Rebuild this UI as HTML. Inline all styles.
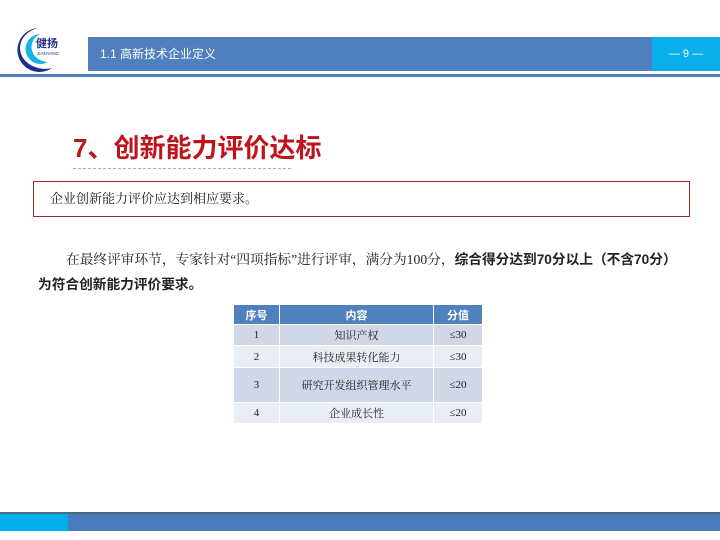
<!DOCTYPE html>
<html><head><meta charset="utf-8"><style>
*{margin:0;padding:0;box-sizing:border-box}
body{width:720px;height:540px;background:#fff;position:relative;overflow:hidden;font-family:"Liberation Sans","Noto Sans CJK SC",sans-serif}
.a{position:absolute}
.s{font-family:"Liberation Serif","Noto Serif CJK SC",serif}
table{border-collapse:collapse;font-size:11px;color:#222}
td{text-align:center;border:1px solid #fff;padding:0;vertical-align:middle}
</style></head><body>
<svg class="a" style="left:12px;top:24px" width="56" height="52" viewBox="0 0 56 52">
<path d="M26 4 A22 22 0 1 0 40 44 A24 20 0 0 1 26 4Z" fill="#1b2f8f"/>
<path d="M28 10 A15 15 0 1 0 36 38 A17 15 0 0 1 28 10Z" fill="#13b4e6"/>
<text x="24" y="23" font-size="11" font-weight="bold" fill="#1b2f8f" font-family="Noto Sans CJK SC">健扬</text>
<text x="25" y="31" font-size="4.5" fill="#1b2f8f">JIANYANG</text>
</svg>
<div class="a" style="left:88px;top:37px;width:564px;height:34px;background:#4f7fbf;color:#fff;font-size:12px;line-height:34px;padding-left:12px">1.1 高新技术企业定义</div>
<div class="a" style="left:652px;top:37px;width:68px;height:34px;background:#0aaee8;color:#fff;font-size:11px;line-height:34px;text-align:center">— 9 —</div>
<div class="a" style="left:0;top:74px;width:720px;height:3px;background:#4f7fbf"></div>
<div class="a" style="left:73px;top:131px;font-size:26px;font-weight:bold;color:#c0141c;line-height:34px">7、创新能力评价达标</div>
<div class="a" style="left:73px;top:168px;width:218px;border-top:1px dashed #d9a07a"></div>
<div class="a s" style="left:33px;top:181px;width:657px;height:36px;border:1px solid #a0282c;font-size:13px;line-height:34px;padding-left:16px;color:#222">企业创新能力评价应达到相应要求。</div>
<div class="a" style="left:38px;top:247px;width:680px;font-size:13.7px;line-height:25px;color:#222;white-space:nowrap"><span class="s" style="padding-left:28px">在最终评审环节，专家针对“四项指标”进行评审，满分为100分，</span><b>综合得分达到70分以上（不含70分）</b><br><b>为符合创新能力评价要求。</b></div>
<table class="a s" style="left:233px;top:304px;width:250px">
<tr style="height:20px;background:#4f81bd;color:#fff;font-weight:bold;font-family:'Liberation Sans','Noto Sans CJK SC',sans-serif"><td style="width:46px">序号</td><td style="width:154px">内容</td><td>分值</td></tr>
<tr style="height:21px;background:#d0d8e8"><td>1</td><td>知识产权</td><td>≤30</td></tr>
<tr style="height:22px;background:#e9edf4"><td>2</td><td>科技成果转化能力</td><td>≤30</td></tr>
<tr style="height:35px;background:#d0d8e8"><td>3</td><td>研究开发组织管理水平</td><td>≤20</td></tr>
<tr style="height:21px;background:#e9edf4"><td>4</td><td>企业成长性</td><td>≤20</td></tr>
</table>
<div class="a" style="left:0;top:512px;width:720px;height:2px;background:#4a6a80"></div>
<div class="a" style="left:0;top:514px;width:720px;height:17px;background:#4a7bbd"></div>
<div class="a" style="left:0;top:514px;width:68px;height:17px;background:#00aeef"></div>
</body></html>
